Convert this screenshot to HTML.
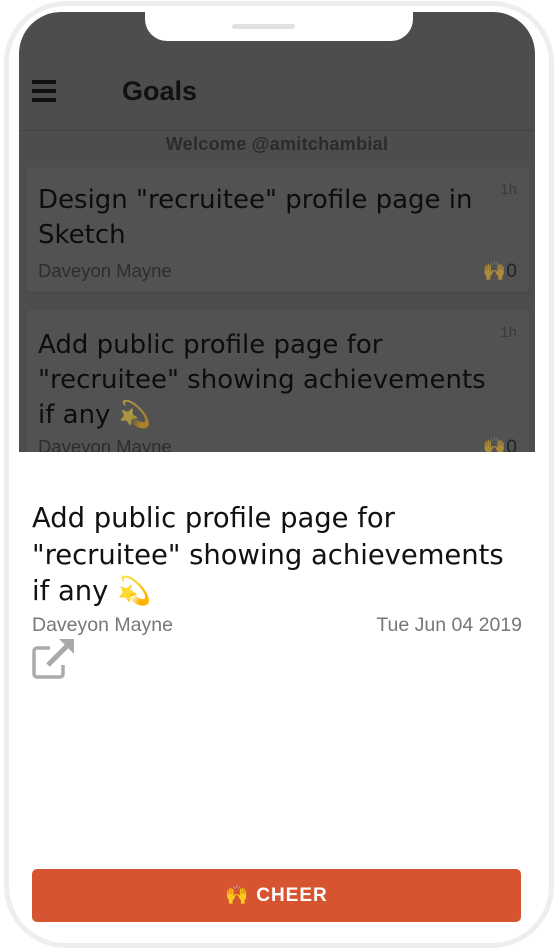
<!DOCTYPE html>
<html><head><meta charset="utf-8"><style>
*{margin:0;padding:0;box-sizing:border-box}
body{width:556px;height:950px;background:#fff;position:relative;overflow:hidden;font-family:"Liberation Sans","Noto Sans CJK JP",sans-serif}
.frame{position:absolute;left:4px;top:1px;width:550px;height:947px;border:5px solid #eeeeee;border-radius:62px;background:#fff}
.screen{position:absolute;left:19px;top:12px;width:516px;height:924px;border-radius:42px;overflow:hidden;background:#fff}
.dark{position:absolute;left:0;top:0;width:516px;height:440px;background:#4d4d4d;overflow:hidden}
.notch{position:absolute;left:126px;top:0;width:268px;height:29px;background:#fff;border-radius:0 0 22px 22px}
.pill{position:absolute;left:87px;top:12px;width:63px;height:5px;border-radius:3px;background:#e2e2e2}
.hdr{position:absolute;left:0;top:0;width:516px;height:119px;border-bottom:1px solid #444}
.ham{position:absolute;left:13px;top:68px;width:24px}
.ham i{display:block;height:4px;background:#111;margin-bottom:5px}
.title{position:absolute;left:103px;top:64px;font-size:27px;font-weight:bold;color:#111}
.welcome{position:absolute;left:0;width:516px;top:122px;text-align:center;font-size:18px;font-weight:bold;color:#2b2b2b;letter-spacing:0.3px}
.card{position:absolute;left:7px;width:503px;background:#525252;border-radius:4px;box-shadow:0 1px 2px #444}
.card .t{position:absolute;left:12px;font-family:"DejaVu Sans",sans-serif;font-size:26px;line-height:35px;color:#0d0d0d;white-space:nowrap}
.card .n{position:absolute;left:12px;font-size:18.5px;color:#2d2d2d}
.card .h{position:absolute;right:12px;top:14px;font-size:15px;color:#3a3a3a}
.card .c{position:absolute;right:12px;font-size:19px;color:#222}
.sheet{position:absolute;left:13px;top:489px;width:490px}
.big{font-family:"DejaVu Sans",sans-serif;font-size:27.4px;line-height:36.5px;color:#111;white-space:nowrap}
.meta{display:flex;justify-content:space-between;font-size:19.5px;color:#777;margin-top:3px}
.btn{position:absolute;left:13px;top:857px;width:489px;height:53px;background:#d75430;border-radius:5px;color:#fff;font-size:19px;font-weight:bold;letter-spacing:1px;text-align:center;line-height:53px}
</style></head><body>
<div class="frame"></div>
<div class="screen">
 <div class="dark">
  <div class="hdr"></div>
  <div class="ham"><i></i><i></i><i></i></div>
  <div class="title">Goals</div>
  <div class="welcome">Welcome @amitchambial</div>
  <div class="card" style="top:155px;height:125px">
   <div class="t" style="top:16px">Design "recruitee" profile page in<br>Sketch</div>
   <div class="h">1h</div>
   <div class="n" style="top:93px">Daveyon Mayne</div>
   <div class="c" style="top:92px"><span style="opacity:.5">🙌</span>0</div>
  </div>
  <div class="card" style="top:298px;height:162px">
   <div class="t" style="top:18px">Add public profile page for<br>"recruitee" showing achievements<br>if any <span style="opacity:.5">💫</span></div>
   <div class="h">1h</div>
   <div class="n" style="top:126px">Daveyon Mayne</div>
   <div class="c" style="top:125px"><span style="opacity:.5">🙌</span>0</div>
  </div>
 </div>
 <div class="notch"><div class="pill"></div></div>
 <div class="sheet">
  <div class="big">Add public profile page for<br>"recruitee" showing achievements<br>if any <span>💫</span></div>
  <div class="meta"><span>Daveyon Mayne</span><span>Tue Jun 04 2019</span></div>
  <svg width="46" height="40" viewBox="0 0 46 40" style="margin-top:2px">
   <path d="M18 9H5a3 3 0 0 0-3 3v23a3 3 0 0 0 3 3h23a3 3 0 0 0 3-3V26" fill="none" stroke="#aaa" stroke-width="3.5" stroke-linejoin="round"/>
   <path d="M16 26L37 5" stroke="#aaa" stroke-width="5"/>
   <path d="M27 0H42V15Z" fill="#aaa"/>
  </svg>
 </div>
 <div class="btn"><span>🙌</span> CHEER</div>
</div>
</body></html>
